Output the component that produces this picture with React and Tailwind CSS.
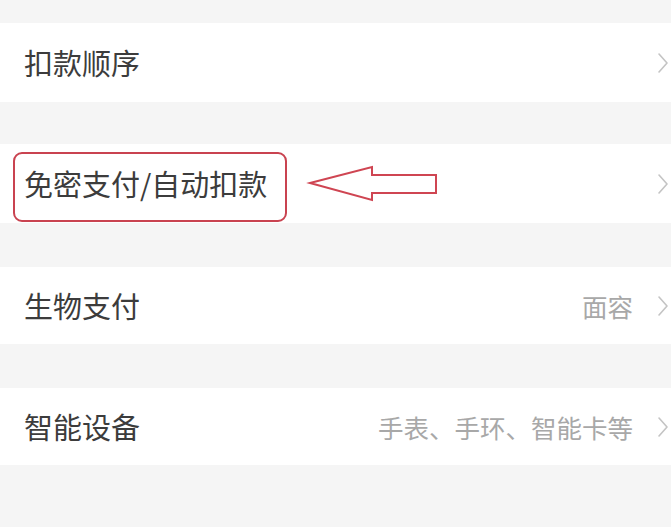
const Chevron = () => (
    <svg width="12" height="22" viewBox="0 0 12 22" className="shrink-0">
        <polyline points="2,2 10,11 2,20" fill="none" stroke="#c4c4c4" strokeWidth="1.6" strokeLinejoin="round" strokeLinecap="round" />
    </svg>
);

const Row = ({ title, hint, className, children }) => (
    <div className={`relative flex items-center justify-between bg-white pl-6 pr-[2px] ${className}`}>
        <span className="text-[29px] text-[#3c3c3c] leading-none">{title}</span>
        <div className="flex items-center gap-[24px]">
            {hint && <span className="text-[25.5px] text-[#a8a8a8] leading-none">{hint}</span>}
            <Chevron />
        </div>
        {children}
    </div>
);

const App = () => {
    return (
        <div
            className="w-[671px] h-[527px] overflow-hidden bg-[#f5f5f5] pt-[23px] flex flex-col"
            style={{ fontFamily: '"Noto Sans CJK SC", "Noto Sans", sans-serif' }}
        >
            <Row title="扣款顺序" className="h-[79px]" />
            <Row title="免密支付/自动扣款" className="h-[79px] mt-[42px]">
                {/* annotation: red box + arrow */}
                <div className="absolute left-[13px] top-[8px] w-[274px] h-[70px] rounded-[9px] border-2 border-[#c94350]" />
                <svg className="absolute left-[300px] top-[11px]" width="145" height="55" viewBox="0 0 145 55">
                    <polygon
                        points="10,28 72,12 72,20 136,20 136,38 72,38 72,45"
                        fill="none"
                        stroke="#cf4552"
                        strokeWidth="2"
                        strokeLinejoin="miter"
                    />
                </svg>
            </Row>
            <Row title="生物支付" hint="面容" className="h-[77px] mt-[44px]" />
            <Row title="智能设备" hint="手表、手环、智能卡等" className="h-[77px] mt-[44px]" />
        </div>
    );
};

export default App;
